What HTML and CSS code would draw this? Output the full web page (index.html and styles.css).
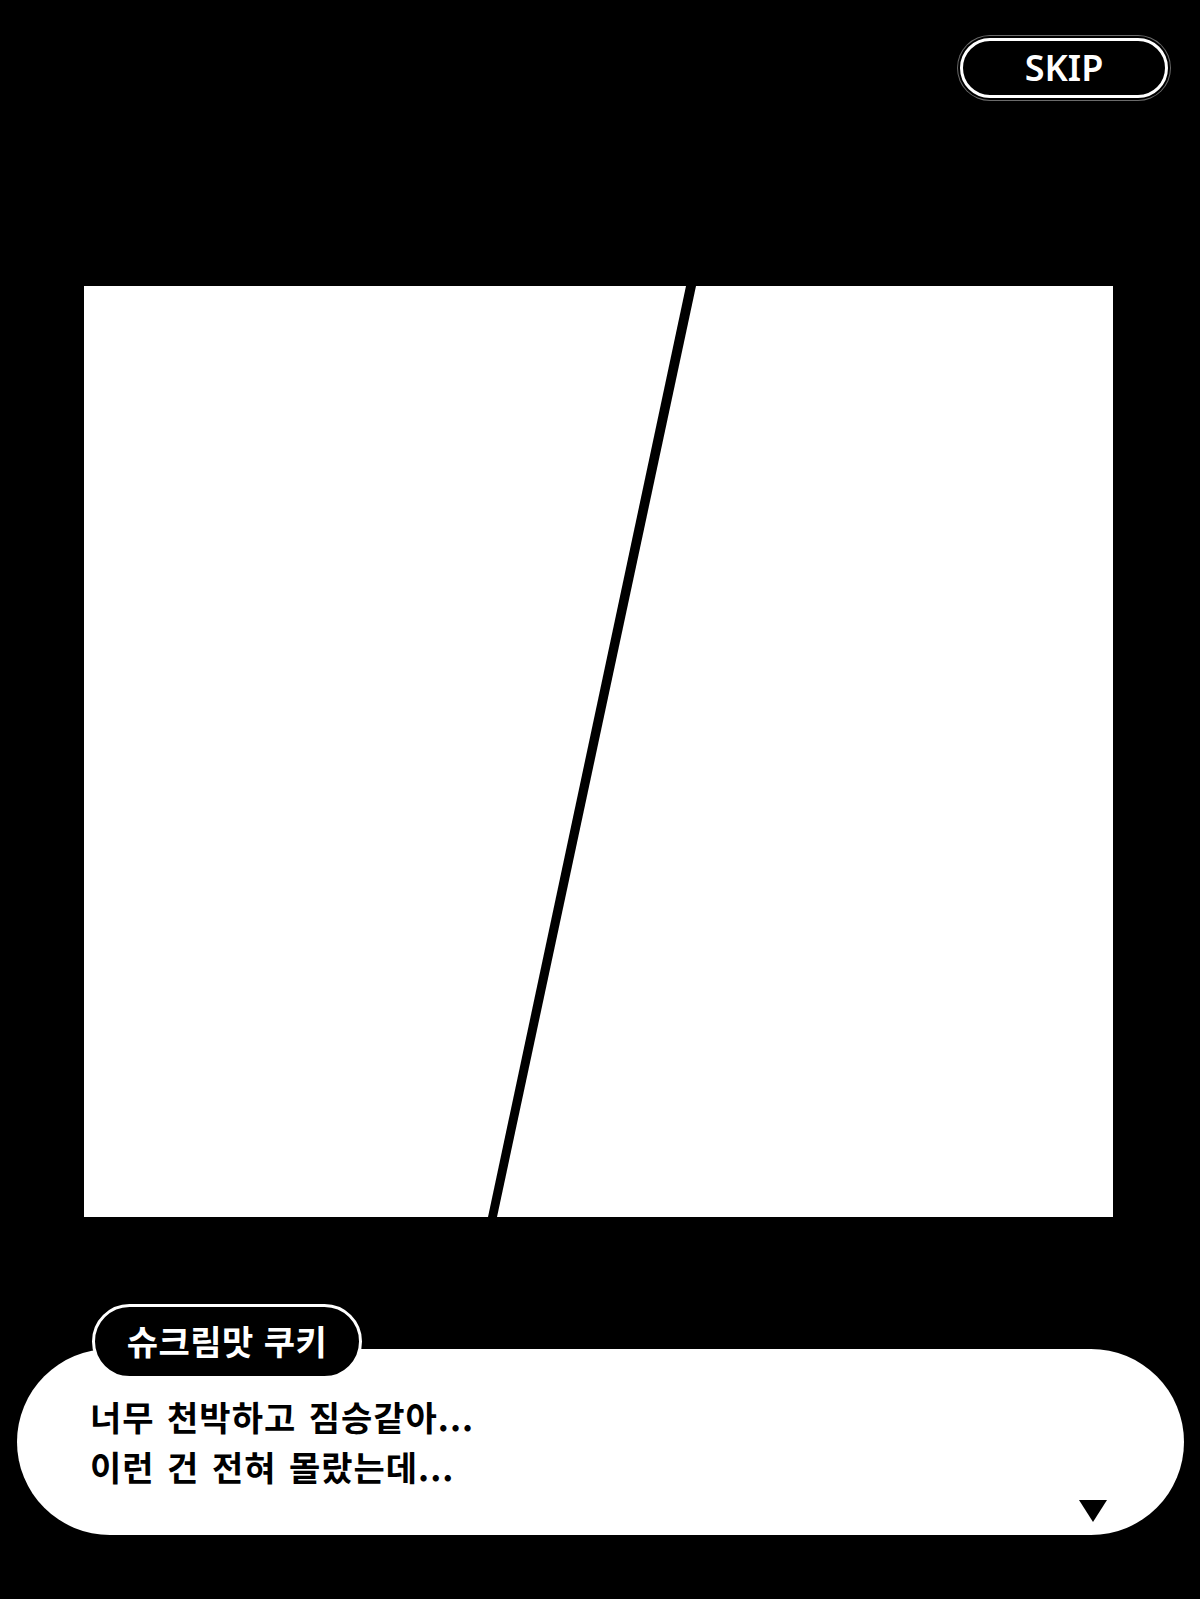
FILE: index.html
```html
<!DOCTYPE html>
<html lang="ko">
<head>
    <meta charset="UTF-8">
    <title>Story</title>
    <meta name="viewport" content="width=device-width, initial-scale=1.0">
    <link rel="stylesheet" href="styles.css">
</head>
<body>
    <div class="screen">
        <div class="top-bar">
            <button class="skip-btn">SKIP</button>
        </div>

        <!-- comic panel split by a slanted gutter -->
        <div class="panel">
            <svg class="panel-art" viewBox="0 0 1029 931" preserveAspectRatio="none">
                <rect x="0" y="0" width="1029" height="931" fill="#fff"/>
                <polygon points="602,0 612,0 413,931 404,931" fill="#000"/>
            </svg>
        </div>

        <div class="dialog">
            <div class="name-tag">슈크림맛 쿠키</div>
            <p class="dialog-text">너무 천박하고 짐승같아...</p>
            <p class="dialog-text">이런 건 전혀 몰랐는데...</p>
            <span class="next-arrow"></span>
        </div>
    </div>
</body>
</html>
```

FILE: styles.css
```css
* {
    margin: 0;
    padding: 0;
    box-sizing: border-box;
}
body {
    background: #000;
    font-family: "Noto Sans CJK KR", "Noto Sans", sans-serif;
}
.screen {
    width: 1200px;
    height: 1599px;
    background: #000;
    display: flex;
    flex-direction: column;
}
.top-bar {
    display: flex;
    justify-content: flex-end;
    padding: 38px 32px 0 0;
}
.skip-btn {
    width: 208px;
    height: 60px;
    border: 3px solid #fff;
    border-radius: 30px;
    background: #000;
    color: #fff;
    font-family: "Noto Sans", sans-serif;
    font-weight: 600;
    font-size: 36px;
    line-height: 52px;
    box-shadow: 0 0 0 2px #000, 0 0 0 3px #6a6a6a;
    cursor: pointer;
}
.panel {
    margin: 188px 0 0 84px;
    width: 1029px;
    height: 931px;
}
.panel-art {
    display: block;
    width: 100%;
    height: 100%;
}
.dialog {
    position: relative;
    margin: 132px 0 0 17px;
    width: 1167px;
    height: 186px;
    background: #fff;
    border-radius: 93px;
    padding: 46px 0 0 73px;
    display: flex;
    flex-direction: column;
    gap: 6px;
}
.name-tag {
    position: absolute;
    left: 75px;
    top: -45px;
    width: 270px;
    height: 75px;
    background: #000;
    border: 3px solid #fff;
    border-radius: 38px;
    color: #fff;
    font-weight: 700;
    font-size: 34px;
    line-height: 67px;
    text-align: center;
    letter-spacing: 0.5px;
}
.dialog-text {
    color: #000;
    font-weight: 700;
    font-size: 34px;
    line-height: 44px;
    letter-spacing: 1px;
    word-spacing: 2px;
}
.next-arrow {
    position: absolute;
    right: 77px;
    bottom: 13px;
    width: 0;
    height: 0;
    border-left: 14px solid transparent;
    border-right: 14px solid transparent;
    border-top: 22px solid #000;
}
```
